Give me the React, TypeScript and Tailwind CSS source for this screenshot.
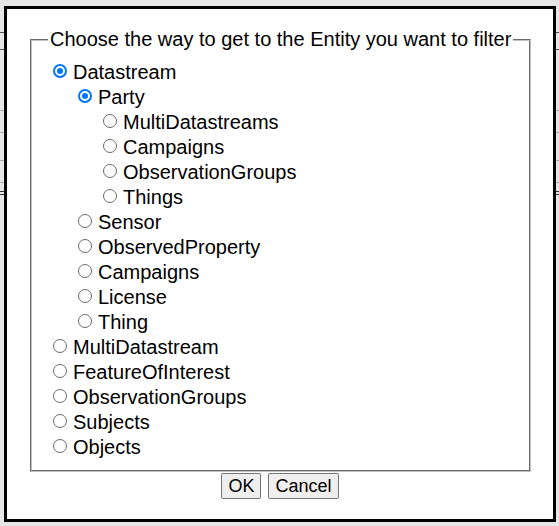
import React from "react";

type Item = { label: string; level: number; checked?: boolean };

const items: Item[] = [
  { label: "Datastream", level: 0, checked: true },
  { label: "Party", level: 1, checked: true },
  { label: "MultiDatastreams", level: 2 },
  { label: "Campaigns", level: 2 },
  { label: "ObservationGroups", level: 2 },
  { label: "Things", level: 2 },
  { label: "Sensor", level: 1 },
  { label: "ObservedProperty", level: 1 },
  { label: "Campaigns", level: 1 },
  { label: "License", level: 1 },
  { label: "Thing", level: 1 },
  { label: "MultiDatastream", level: 0 },
  { label: "FeatureOfInterest", level: 0 },
  { label: "ObservationGroups", level: 0 },
  { label: "Subjects", level: 0 },
  { label: "Objects", level: 0 },
];

const indent = ["pl-0", "pl-[25px]", "pl-[50px]"];

function Radio({ checked }: { checked?: boolean }) {
  return checked ? (
    <span className="mb-[4px] ml-[5px] mr-[6px] flex h-[14px] w-[14px] shrink-0 items-center justify-center rounded-full border-2 border-[#0075ff] bg-white">
      <span className="h-[6px] w-[6px] rounded-full bg-[#0075ff]" />
    </span>
  ) : (
    <span className="mb-[4px] ml-[5px] mr-[6px] h-[14px] w-[14px] shrink-0 rounded-full border border-[#6b6b6b] bg-white" />
  );
}

export default function App() {
  return (
    <div className="relative h-[526px] w-[559px] overflow-hidden bg-[#e6e6e6] font-['Liberation_Sans',Arial,sans-serif] text-black">
      {/* background page remnants */}
      <div className="flex flex-col">
        <div className="h-[32px]" />
        <div className="h-[17px] border-t border-[#555]" />
        <div className="h-[61px] border-t border-[#555]" />
        <div className="h-[22px] border-t border-[#aaa]" />
        <div className="h-[28px] border-t border-[#aaa]" />
        <div className="h-[22px] border-t border-[#aaa]" />
        <div className="h-[9px] border-t border-[#aaa]" />
        <div className="h-[3px] border-t border-[#333]" />
        <div className="border-t border-[#333]" />
      </div>

      {/* dialog */}
      <div className="absolute left-[4px] top-[6px] flex h-[516px] w-[552px] flex-col border-[3px] border-black bg-white">
        <fieldset className="mx-[23px] mt-[19px] border-2 border-[#c0c0c0] px-[16px] pb-[10px] pt-[9px] [border-style:groove]">
          <legend className="whitespace-nowrap px-[2px] text-[20px] leading-[23px]">
            Choose the way to get to the Entity you want to filter
          </legend>
          <div className="flex flex-col">
            {items.map((it, i) => (
              <div
                key={i}
                className={`flex h-[25px] items-center text-[20px] leading-[23px] ${indent[it.level]}`}
              >
                <Radio checked={it.checked} />
                <span>{it.label}</span>
              </div>
            ))}
          </div>
        </fieldset>
        <div className="mt-[1px] flex justify-center gap-[7px]">
          <button className="flex h-[26px] items-center rounded-[2px] border border-[#767676] bg-[#efefef] px-[6px] text-[18px]">
            OK
          </button>
          <button className="flex h-[26px] items-center rounded-[2px] border border-[#767676] bg-[#efefef] px-[6px] text-[18px]">
            Cancel
          </button>
        </div>
      </div>
    </div>
  );
}
